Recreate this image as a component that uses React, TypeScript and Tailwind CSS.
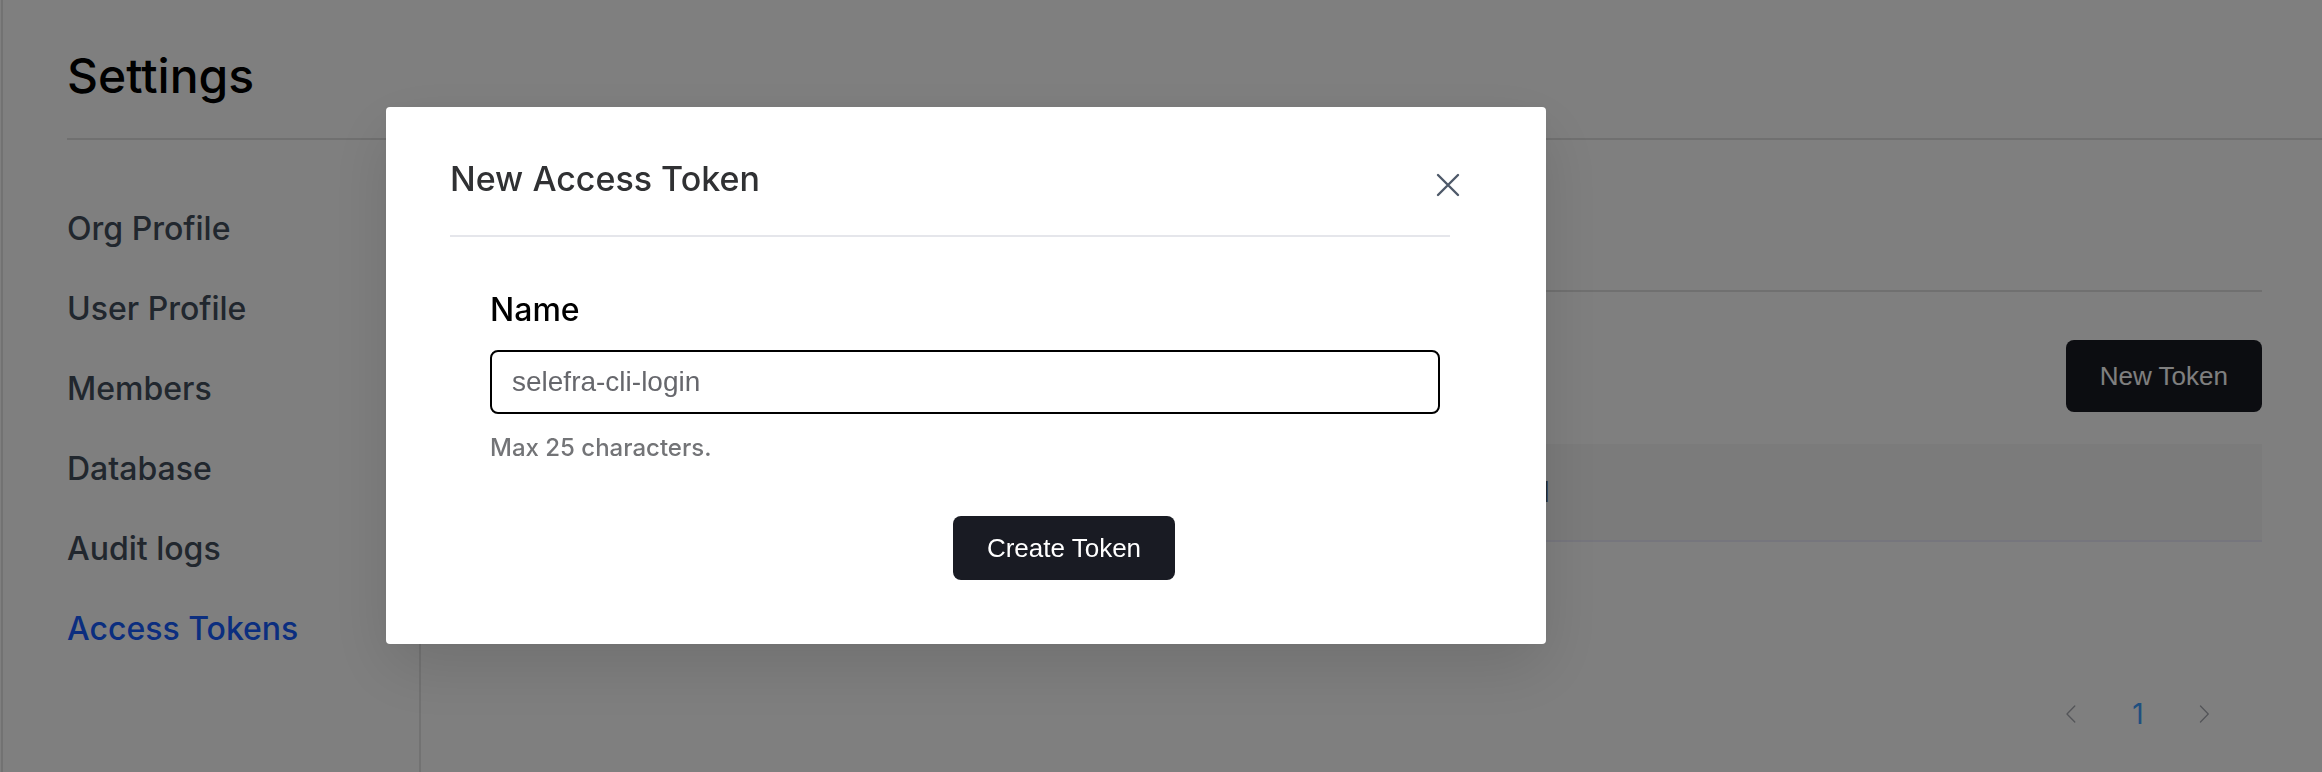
import React, { useState } from "react";

const sections = ["Org Profile", "User Profile", "Members", "Database", "Audit logs", "Access Tokens"];

function Chevron({ d }: { d: string }) {
  return (
    <svg viewBox="0 0 1024 1024" className="size-6" fill="currentColor" aria-hidden="true">
      <path d={d} />
    </svg>
  );
}

function Sidebar() {
  return (
    <nav className="w-[354px] shrink-0 border-r-2 border-[#e5e5e5] pt-[49px]">
      <ul>
        {sections.map((name) => (
          <li key={name}>
            <a
              href="#"
              className={
                name === "Access Tokens"
                  ? "flex h-20 items-center text-[32px] font-medium text-[#165dff]"
                  : "flex h-20 items-center text-[32px] font-medium text-[#434e5c]"
              }
            >
              {name}
            </a>
          </li>
        ))}
      </ul>
    </nav>
  );
}

function TokenPanel() {
  return (
    <main className="min-w-0 flex-1 px-[60px]">
      <div className="h-[152px] border-b-2 border-[#e0e0e0]" />
      <div className="flex justify-end pt-12 pb-8">
        <button className="h-[72px] rounded-lg bg-[#191b23] px-[34px] font-['Liberation_Sans',sans-serif] text-[26px] text-white">
          New Token
        </button>
      </div>
      <table className="w-full table-fixed border-collapse">
        <thead>
          <tr className="h-[97px] border-b-2 border-[#ececfa] bg-[#f7f7f7]">
            <th className="w-[60%] pr-0 text-right text-[28px] font-medium text-[#4e5969]">Last Used</th>
            <th className="w-[40%]" />
          </tr>
        </thead>
      </table>
      <div className="flex items-center justify-end gap-[42px] pt-[160px] pr-[46px] text-[#a8abb2]">
        <button aria-label="Previous page">
          <Chevron d="M609.4 149.6 277.5 489.6a32 32 0 0 0 0 44.6l331.9 340.2a29.1 29.1 0 0 0 41.7 0 30.6 30.6 0 0 0 0-42.7L339.3 512l311.9-319.9a30.6 30.6 0 0 0 0-42.6 29.1 29.1 0 0 0-41.8 0z" />
        </button>
        <button className="w-6 text-[28px] leading-6 text-[#409eff]">1</button>
        <button aria-label="Next page">
          <Chevron d="M340.9 149.3a30.6 30.6 0 0 0 0 42.8L652.7 512 340.9 831.9a30.6 30.6 0 0 0 0 42.7 29.1 29.1 0 0 0 41.7 0L714.2 534.3a32 32 0 0 0 0-44.6L382.6 149.4a29.1 29.1 0 0 0-41.7-.1z" />
        </button>
      </div>
    </main>
  );
}

function TokenDialog() {
  const [name, setName] = useState("");
  return (
    <div className="fixed inset-0 bg-black/50 pt-[107px] pl-[386px]">
      <div
        role="dialog"
        aria-labelledby="dialog-title"
        className="w-full max-w-[1160px] rounded-sm bg-white pt-11 pr-24 pb-16 pl-16 shadow-[0_24px_64px_rgba(0,0,0,0.12),0_0_12px_rgba(0,0,0,0.04)]"
      >
        <header className="relative border-b-2 border-[#e5e6eb] pb-7">
          <h2 id="dialog-title" className="text-[34px] leading-[56px] font-medium text-[#303133]">
            New Access Token
          </h2>
          <button aria-label="Close" className="absolute top-5 right-[-12px] p-px text-[#4e5969]">
            <svg viewBox="0 0 26 26" className="size-[26px]" fill="none" stroke="currentColor" strokeWidth="2.4" strokeLinecap="round" aria-hidden="true">
              <path d="M3 3 23 23M23 3 3 23" />
            </svg>
          </button>
        </header>
        <form className="pt-[49px] pr-[10px] pl-10" onSubmit={(e) => e.preventDefault()}>
          <label htmlFor="token-name" className="block text-[32px] leading-[48px] font-medium text-black">
            Name
          </label>
          <input
            id="token-name"
            value={name}
            maxLength={25}
            onChange={(e) => setName(e.target.value)}
            placeholder="selefra-cli-login"
            className="mt-4 block h-16 w-full rounded-lg border-2 border-black px-5 font-['Liberation_Sans',sans-serif] text-[28px] outline-none placeholder:text-[#66676c]"
          />
          <p className="pt-4 text-[24px] leading-9 font-medium text-[#737477]">Max 25 characters.</p>
          <div className="flex justify-center pt-[50px] pl-[198px]">
            <button type="submit" className="h-16 rounded-lg bg-[#191b23] px-[34px] font-['Liberation_Sans',sans-serif] text-[26px] text-white">
              Create Token
            </button>
          </div>
        </form>
      </div>
    </div>
  );
}

export default function App() {
  return (
    <div className="flex min-h-screen bg-white pl-px font-['Inter',sans-serif]">
      <div className="flex min-w-0 flex-1 flex-col border-l-2 border-[#e5e5e5] pl-16">
        <header className="border-b-2 border-[#e0e0e0] pt-10 pb-[26px]">
          <h1 className="text-[48px] leading-[72px] font-medium text-black">Settings</h1>
        </header>
        <div className="flex flex-1">
          <Sidebar />
          <TokenPanel />
        </div>
      </div>
      <TokenDialog />
    </div>
  );
}
